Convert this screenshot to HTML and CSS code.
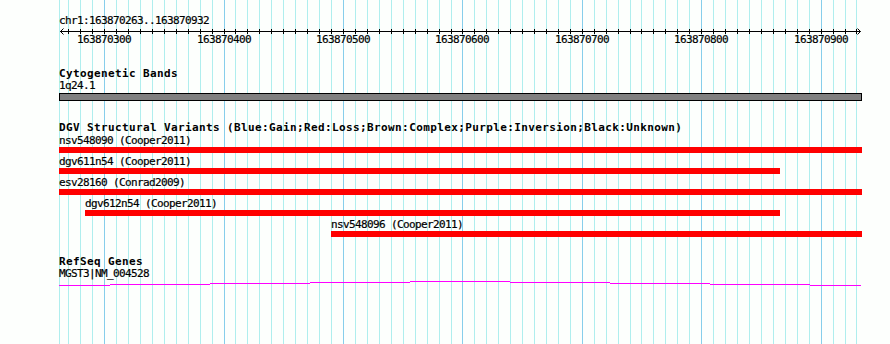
FILE: index.html
```html
<!DOCTYPE html>
<html lang="en">
<head>
    <meta charset="UTF-8">
    <title>chr1:163870263..163870932</title>
    <link rel="stylesheet" href="styles.css">
</head>
<body>
    <div class="panel">
        <!-- grid: one line per 10 bp, darker every 100 bp -->
        <svg class="grid" width="890" height="344">
            <path class="minor" d="M59.5 0V344M68.5 0V344M80.5 0V344M92.5 0V344M116.5 0V344M128.5 0V344M140.5 0V344M152.5 0V344M164.5 0V344M176.5 0V344M188.5 0V344M200.5 0V344M212.5 0V344M235.5 0V344M247.5 0V344M259.5 0V344M271.5 0V344M283.5 0V344M295.5 0V344M307.5 0V344M319.5 0V344M331.5 0V344M355.5 0V344M367.5 0V344M379.5 0V344M391.5 0V344M403.5 0V344M415.5 0V344M427.5 0V344M439.5 0V344M451.5 0V344M474.5 0V344M486.5 0V344M498.5 0V344M510.5 0V344M522.5 0V344M534.5 0V344M546.5 0V344M558.5 0V344M570.5 0V344M594.5 0V344M606.5 0V344M618.5 0V344M630.5 0V344M641.5 0V344M653.5 0V344M665.5 0V344M677.5 0V344M689.5 0V344M713.5 0V344M725.5 0V344M737.5 0V344M749.5 0V344M761.5 0V344M773.5 0V344M785.5 0V344M797.5 0V344M809.5 0V344M833.5 0V344M845.5 0V344M856.5 0V344"/>
            <path class="major" d="M104.5 0V344M224.5 0V344M343.5 0V344M462.5 0V344M582.5 0V344M701.5 0V344M821.5 0V344"/>
        </svg>

        <div class="tracks">
            <div class="ruler">
                <div class="label">chr1:163870263..163870932</div>
                <svg class="axis" width="803" height="8">
                    <path d="M1 4.5H801.5M4.5 1.5L1.5 4.5L4.5 7.5M798.5 1.5L801.5 4.5L798.5 7.5"/>
                    <path d="M9.5 2v5M21.5 2v5M33.5 2v5M45.5 2v5M57.5 2v5M69.5 2v5M81.5 2v5M93.5 2v5M105.5 2v5M117.5 2v5M129.5 2v5M141.5 2v5M153.5 2v5M165.5 2v5M176.5 2v5M188.5 2v5M200.5 2v5M212.5 2v5M224.5 2v5M236.5 2v5M248.5 2v5M260.5 2v5M272.5 2v5M284.5 2v5M296.5 2v5M308.5 2v5M320.5 2v5M332.5 2v5M344.5 2v5M356.5 2v5M368.5 2v5M380.5 2v5M392.5 2v5M403.5 2v5M415.5 2v5M427.5 2v5M439.5 2v5M451.5 2v5M463.5 2v5M475.5 2v5M487.5 2v5M499.5 2v5M511.5 2v5M523.5 2v5M535.5 2v5M547.5 2v5M559.5 2v5M571.5 2v5M582.5 2v5M594.5 2v5M606.5 2v5M618.5 2v5M630.5 2v5M642.5 2v5M654.5 2v5M666.5 2v5M678.5 2v5M690.5 2v5M702.5 2v5M714.5 2v5M726.5 2v5M738.5 2v5M750.5 2v5M762.5 2v5M774.5 2v5M786.5 2v5M797.5 2v5"/>
                </svg>
                <div class="ticks">
                    <span class="tick label" style="left:45px">163870300</span>
                    <span class="tick label" style="left:165px">163870400</span>
                    <span class="tick label" style="left:284px">163870500</span>
                    <span class="tick label" style="left:403px">163870600</span>
                    <span class="tick label" style="left:523px">163870700</span>
                    <span class="tick label" style="left:642px">163870800</span>
                    <span class="tick label" style="left:762px">163870900</span>
                </div>
            </div>

            <section class="track cyto">
                <h2 class="track-title">Cytogenetic Bands</h2>
                <div class="label">1q24.1</div>
                <div class="band"></div>
            </section>

            <section class="track dgv">
                <h2 class="track-title">DGV Structural Variants (Blue:Gain;Red:Loss;Brown:Complex;Purple:Inversion;Black:Unknown)</h2>
                <div class="features">
                    <div class="feature" style="margin-left:0px; width:803px">
                        <div class="label">nsv548090 (Cooper2011)</div>
                        <div class="bar"></div>
                    </div>
                    <div class="feature" style="margin-left:0px; width:721px">
                        <div class="label">dgv611n54 (Cooper2011)</div>
                        <div class="bar"></div>
                    </div>
                    <div class="feature" style="margin-left:0px; width:803px">
                        <div class="label">esv28160 (Conrad2009)</div>
                        <div class="bar"></div>
                    </div>
                    <div class="feature" style="margin-left:26px; width:695px">
                        <div class="label">dgv612n54 (Cooper2011)</div>
                        <div class="bar"></div>
                    </div>
                    <div class="feature" style="margin-left:272px; width:531px">
                        <div class="label">nsv548096 (Cooper2011)</div>
                        <div class="bar"></div>
                    </div>
                </div>
            </section>

            <section class="track refseq">
                <h2 class="track-title">RefSeq Genes</h2>
                <div class="label">MGST3|NM_004528</div>
                <svg class="gene" width="803" height="7">
                    <path d="M0 5.5H51M51 4.5H151M151 3.5H251M251 2.5H351M351 1.5H451M451 2.5H551M551 3.5H651M651 4.5H751M751 5.5H802"/>
                </svg>
            </section>
        </div>
    </div>
</body>
</html>
```

FILE: styles.css
```css
body {
    margin: 0;
    background-color: #fdfffd;
    font-family: "DejaVu Sans Mono", "Liberation Mono", monospace;
    color: #000;
}
.panel {
    position: relative;
    width: 890px;
    height: 344px;
    overflow: hidden;
}
.grid {
    position: absolute;
    left: 0;
    top: 0;
}
.grid path {
    stroke-width: 1;
    fill: none;
}
.grid .minor {
    stroke: #afeeee;
}
.grid .major {
    stroke: #87ceeb;
}
.tracks {
    position: relative;
    margin-left: 59px;
    width: 803px;
}
.label {
    font-size: 11px;
    line-height: 12px;
    height: 12px;
    letter-spacing: -0.62px;
    white-space: nowrap;
    -webkit-text-stroke: 0.2px #000;
}
.track-title {
    margin: 0;
    font-size: 11px;
    font-weight: bold;
    line-height: 12px;
    height: 12px;
    letter-spacing: 0.38px;
    white-space: nowrap;
}
.ruler {
    padding-top: 15px;
}
.axis {
    display: block;
}
.axis path {
    stroke: #000;
    stroke-width: 1;
    fill: none;
}
.ticks {
    position: relative;
    height: 12px;
    margin-top: -1px;
}
.tick {
    position: absolute;
    top: 0;
    transform: translateX(-50%);
}
.cyto {
    margin-top: 22px;
}
.band {
    height: 6px;
    margin-top: 1px;
    border: 1px solid #000;
    background-color: #808080;
}
.dgv {
    margin-top: 21px;
}
.features {
    padding-top: 1px;
}
.feature {
    margin-bottom: 3px;
}
.bar {
    height: 6px;
    background-color: #ff0000;
}
.refseq {
    margin-top: 19px;
}
.gene {
    display: block;
}
.gene path {
    stroke: #ff00ff;
    stroke-width: 1;
    fill: none;
}
```
